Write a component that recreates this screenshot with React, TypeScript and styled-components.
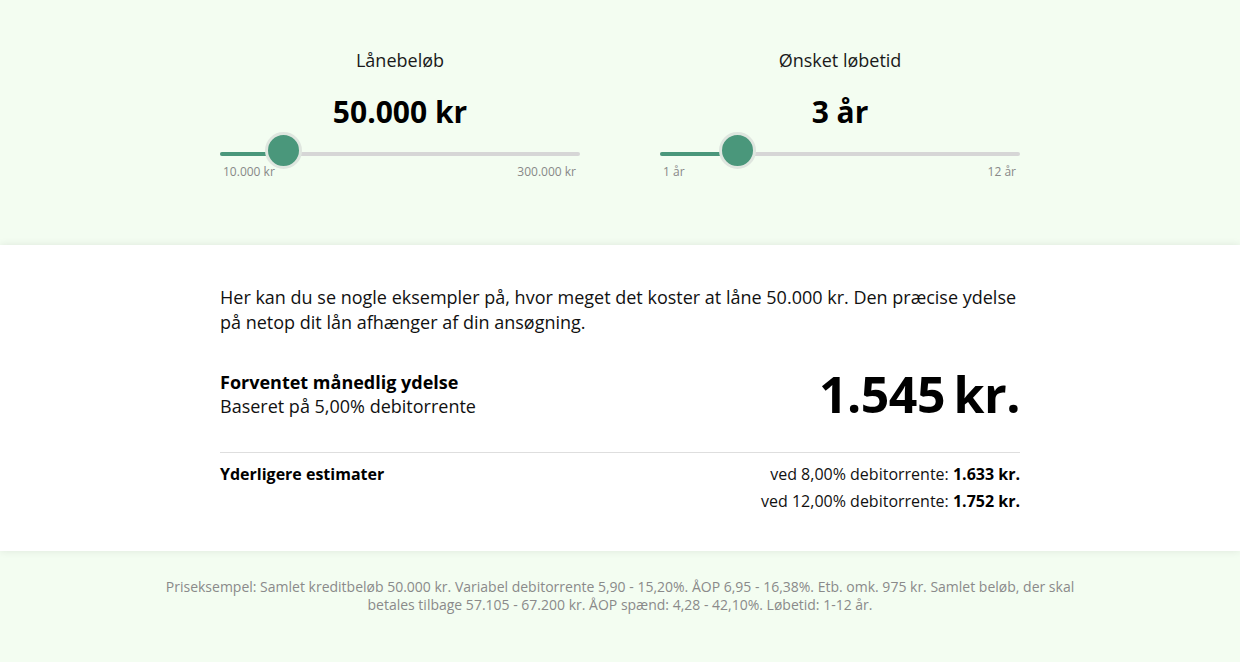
import styled, { createGlobalStyle } from 'styled-components';

const GlobalStyle = createGlobalStyle`
    html, body {
        margin: 0;
        padding: 0;
        background-color: #f3fdf1;
        font-family: "Open Sans", "Noto Sans", sans-serif;
        color: #111;
    }
`;

const THUMB = 37;

const Top = styled.section`
    background-color: #f3fdf1;
    height: 245px;
    box-sizing: border-box;
    padding-top: 48px;
    display: flex;
    justify-content: center;
    gap: 80px;
`;

const SliderBox = styled.div`
    width: 360px;
    display: flex;
    flex-direction: column;
    align-items: stretch;
`;

const SliderLabel = styled.div`
    font-size: 18px;
    line-height: 24px;
    text-align: center;
    color: #1a1a1a;
`;

const SliderValue = styled.div`
    font-size: 30px;
    font-weight: 700;
    line-height: 40px;
    text-align: center;
    margin-top: 20px;
    color: #000;
`;

const Track = styled.div`
    position: relative;
    height: 4px;
    border-radius: 2px;
    background-color: #d6d6d6;
    margin-top: 20px;
`;

const Fill = styled.div`
    position: absolute;
    left: 0;
    top: 0;
    height: 4px;
    border-radius: 2px;
    background-color: #4a977b;
`;

const Thumb = styled.div`
    position: absolute;
    top: -20.5px;
    width: ${THUMB}px;
    height: ${THUMB}px;
    box-sizing: border-box;
    border-radius: 50%;
    border: 3px solid #dfe6df;
    background-color: #4a977b;
`;

const Range = styled.div`
    display: flex;
    justify-content: space-between;
    margin-top: 9px;
    padding: 0 4px 0 3px;
    font-size: 12px;
    line-height: 14px;
    color: #888;
`;

const Middle = styled.section`
    background-color: #fff;
    box-shadow: 0 0 8px rgba(0, 0, 0, 0.09);
    position: relative;
    padding: 40px 0 36px;
`;

const Inner = styled.div`
    width: 800px;
    margin: 0 auto;
`;

const Intro = styled.p`
    margin: 0;
    font-size: 18px;
    line-height: 25px;
    color: #111;
`;

const SummaryRow = styled.div`
    display: flex;
    justify-content: space-between;
    align-items: center;
    margin-top: 34px;
    padding-bottom: 33px;
    border-bottom: 1px solid #dedede;
`;

const SummaryText = styled.div`
    font-size: 18px;
    line-height: 24px;
`;

const Strong = styled.div`
    font-weight: 700;
    color: #000;
`;

const BigAmount = styled.div`
    font-size: 50px;
    font-weight: 700;
    line-height: 50px;
    letter-spacing: -0.5px;
    word-spacing: -4px;
    color: #000;
`;

const EstimateRow = styled.div`
    display: flex;
    justify-content: space-between;
    margin-top: 8px;
    font-size: 16px;
    line-height: 27px;
`;

const EstimateList = styled.div`
    text-align: right;
    color: #111;
    b {
        color: #000;
    }
`;

const Footer = styled.footer`
    background-color: #f3fdf1;
    padding: 27px 0 40px;
`;

const FooterText = styled.p`
    margin: 0 auto;
    max-width: 920px;
    text-align: center;
    font-size: 14px;
    line-height: 18px;
    color: #8a8a8a;
`;

type SliderProps = {
    label: string;
    value: string;
    ratio: number;
    min: string;
    max: string;
};

function Slider({ label, value, ratio, min, max }: SliderProps) {
    const center = THUMB / 2 + ratio * (360 - THUMB);
    return (
        <SliderBox>
            <SliderLabel>{label}</SliderLabel>
            <SliderValue>{value}</SliderValue>
            <Track>
                <Fill style={{ width: center }} />
                <Thumb style={{ left: center - THUMB / 2 }} />
            </Track>
            <Range>
                <span>{min}</span>
                <span>{max}</span>
            </Range>
        </SliderBox>
    );
}

export default function App() {
    return (
        <div>
            <GlobalStyle />
            <Top>
                <Slider label="Lånebeløb" value="50.000 kr" ratio={40000 / 290000} min="10.000 kr" max="300.000 kr" />
                <Slider label="Ønsket løbetid" value="3 år" ratio={2 / 11} min="1 år" max="12 år" />
            </Top>
            <Middle>
                <Inner>
                    <Intro>
                        Her kan du se nogle eksempler på, hvor meget det koster at låne 50.000 kr. Den præcise ydelse på netop dit lån afhænger af din ansøgning.
                    </Intro>
                    <SummaryRow>
                        <SummaryText>
                            <Strong>Forventet månedlig ydelse</Strong>
                            <div>Baseret på 5,00% debitorrente</div>
                        </SummaryText>
                        <BigAmount>1.545 kr.</BigAmount>
                    </SummaryRow>
                    <EstimateRow>
                        <Strong>Yderligere estimater</Strong>
                        <EstimateList>
                            <div>ved 8,00% debitorrente: <b>1.633 kr.</b></div>
                            <div>ved 12,00% debitorrente: <b>1.752 kr.</b></div>
                        </EstimateList>
                    </EstimateRow>
                </Inner>
            </Middle>
            <Footer>
                <FooterText>
                    Priseksempel: Samlet kreditbeløb 50.000 kr. Variabel debitorrente 5,90 - 15,20%. ÅOP 6,95 - 16,38%. Etb. omk. 975 kr. Samlet beløb, der skal betales tilbage 57.105 - 67.200 kr. ÅOP spænd: 4,28 - 42,10%. Løbetid: 1-12 år.
                </FooterText>
            </Footer>
        </div>
    );
}
